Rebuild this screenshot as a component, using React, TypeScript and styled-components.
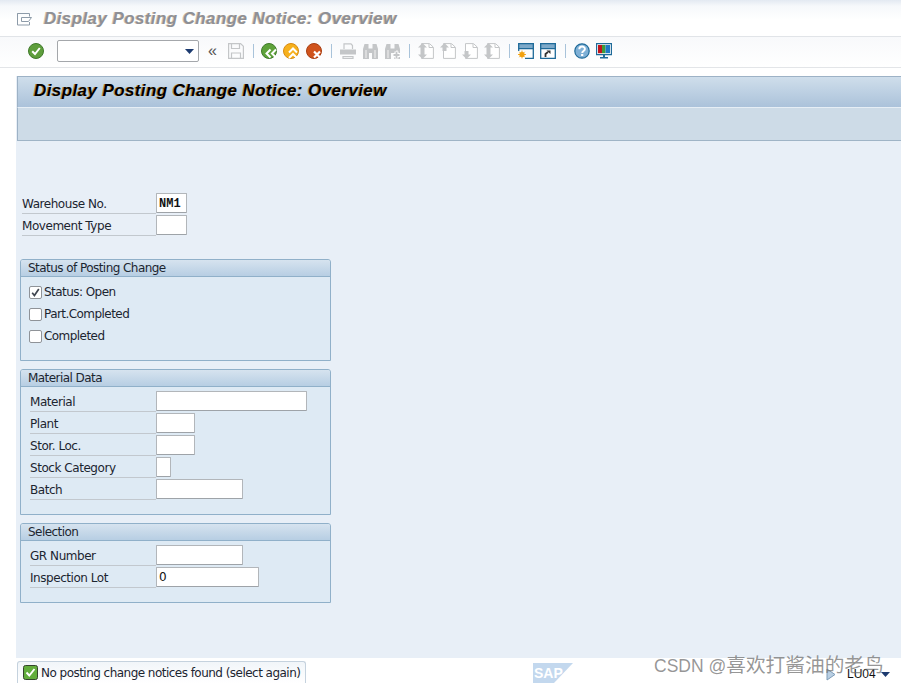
import styled, { createGlobalStyle } from "styled-components";

const GlobalStyle = createGlobalStyle`
    html, body {
        margin: 0;
        padding: 0;
        background: #fff;
    }
    body {
        font-family: "DejaVu Sans", "Noto Sans", sans-serif;
    }
    * {
        box-sizing: border-box;
    }
`;

const Page = styled.div`
    position: relative;
    width: 901px;
    height: 683px;
    overflow: hidden;
    display: flex;
    flex-direction: column;
    background: #fff;
`;

const TitleBar = styled.div`
    height: 37px;
    flex: none;
    display: flex;
    align-items: center;
    gap: 12px;
    padding: 2px 0 0 17px;
    background: linear-gradient(#e3e9f2 0, #f6f8fb 6px, #fff 20px);
    border-bottom: 1px solid #e1e4e8;
`;

const WindowTitle = styled.h1`
    margin: 0;
    font: italic bold 17px "Liberation Sans", Arial, sans-serif;
    letter-spacing: 0.4px;
    color: #8e9096;
    text-shadow: -1px 0 0 #d9c6ad;
`;

const Toolbar = styled.div`
    height: 31px;
    flex: none;
    display: flex;
    align-items: center;
    padding: 0 0 2px 27px;
    background: linear-gradient(#f8f9fb, #fff);
    border-bottom: 1px solid #e3e5e8;
`;

const ToolIcon = styled.span<{ $mr?: number }>`
    display: flex;
    flex: none;
    width: 18px;
    margin-right: ${({ $mr }) => $mr ?? 0}px;
    align-items: center;
    justify-content: center;
`;

const ToolSep = styled.span<{ $mr: number }>`
    width: 1px;
    height: 14px;
    flex: none;
    background: #a9c3da;
    margin-right: ${({ $mr }) => $mr}px;
`;

const CommandField = styled.div`
    width: 142px;
    height: 22px;
    flex: none;
    margin: 0 6px 0 12px;
    display: flex;
    align-items: center;
    justify-content: flex-end;
    padding-right: 4px;
    background: #fff;
    border: 1px solid #a4a7ab;
    border-radius: 2px;
`;

const ChevronText = styled.span`
    font: 16px "Liberation Sans", Arial, sans-serif;
    color: #555;
    width: 15px;
    margin-right: 7px;
    flex: none;
    text-align: center;
    line-height: 18px;
`;

const Main = styled.main`
    flex: 1;
    margin: 8px 0 0 16px;
    display: flex;
    flex-direction: column;
    background: #e8eff7;
    min-height: 0;
`;

const ScreenHead = styled.div`
    height: 31px;
    flex: none;
    display: flex;
    align-items: center;
    margin-left: 1px;
    padding: 0 0 2px 16px;
    background: linear-gradient(#cfdeeb, #abc2da);
    border-top: 1px solid #9db2c6;
    border-left: 1px solid #9db2c6;
`;

const ScreenTitle = styled.h2`
    margin: 0;
    font: italic bold 17px "Liberation Sans", Arial, sans-serif;
    letter-spacing: 0.4px;
    color: #000;
    text-shadow: -1px 0 0 #b98a3e;
`;

const AppToolbar = styled.div`
    height: 34px;
    flex: none;
    margin-left: 1px;
    background: #cddbe7;
    border-top: 1px solid #e6eef5;
    border-bottom: 1px solid #9fb4c6;
    border-left: 1px solid #9db2c6;
`;

const Form = styled.div`
    padding: 52px 0 0 4px;
    display: flex;
    flex-direction: column;
`;

const TopRows = styled.div`
    padding: 0 0 0 2px;
    margin-bottom: 22px;
`;

const Row = styled.div`
    height: 22px;
    display: flex;
    align-items: flex-start;
`;

const Label = styled.label<{ $w: number }>`
    width: ${({ $w }) => $w}px;
    height: 21px;
    flex: none;
    padding-top: 3px;
    font-size: 12px;
    line-height: 16px;
    letter-spacing: -0.45px;
    color: #1c2530;
    border-bottom: 1px solid #c2c8ce;
    white-space: nowrap;
    overflow: hidden;
`;

const Field = styled.div<{ $w: number; $mono?: boolean }>`
    width: ${({ $w }) => $w}px;
    height: 20px;
    flex: none;
    padding: 0 0 0 2px;
    background: #fff;
    border: 1px solid #b2b6ba;
    border-bottom-color: #9ea3a8;
    border-radius: 1px;
    font: ${({ $mono }) => ($mono ? 'bold 12px/20px "Liberation Mono", "DejaVu Sans Mono", monospace' : '12px/18px "DejaVu Sans", sans-serif')};
    color: #111;
`;

const Group = styled.section<{ $h: number }>`
    width: 311px;
    height: ${({ $h }) => $h}px;
    flex: none;
    margin-bottom: 8px;
    background: #deeaf4;
    border: 1px solid #90b0c9;
    border-radius: 3px 3px 0 0;
`;

const GroupHead = styled.div`
    height: 17px;
    padding-left: 7px;
    font-size: 12px;
    line-height: 17px;
    letter-spacing: -0.55px;
    color: #1c2530;
    background: linear-gradient(#d6e3ef, #b7cee3);
    border-bottom: 1px solid #90b0c9;
    border-radius: 2px 2px 0 0;
`;

const GroupBody = styled.div<{ $top: number }>`
    padding: ${({ $top }) => $top}px 0 0 9px;
`;

const CheckRow = styled.div`
    height: 22px;
    display: flex;
    align-items: center;
    gap: 2px;
    margin-left: -1px;
    font-size: 12px;
    letter-spacing: -0.55px;
    color: #1c2530;
`;

const Check = styled.span`
    width: 13px;
    height: 13px;
    flex: none;
    display: flex;
    align-items: center;
    justify-content: center;
    background: #fff;
    border: 1px solid #8f9398;
    border-radius: 2px;
`;

const StatusBar = styled.footer`
    height: 25px;
    flex: none;
    display: flex;
    align-items: center;
    padding-left: 17px;
    background: #fff;
`;

const Message = styled.div`
    width: 289px;
    height: 22px;
    align-self: flex-start;
    margin-top: 3px;
    display: flex;
    align-items: center;
    gap: 3px;
    padding-left: 5px;
    font-size: 12px;
    letter-spacing: -0.53px;
    white-space: nowrap;
    color: #1c2530;
    background: linear-gradient(#f1f5f9, #fff);
    border: 1px solid #c5d2de;
    border-bottom: none;
    border-radius: 3px 3px 0 0;
`;

const SapLogo = styled.svg`
    position: absolute;
    left: 533px;
    top: 663px;
`;

const SystemInfo = styled.div`
    position: absolute;
    left: 826px;
    top: 667px;
    display: flex;
    align-items: center;
    font: 12px "Liberation Sans", Arial, sans-serif;
    color: #111;
`;

const SystemName = styled.span`
    margin: 0 5px 0 11px;
`;

const Watermark = styled.div`
    position: absolute;
    left: 654px;
    top: 655px;
    font: 17.5px/20px "Liberation Sans", "Noto Sans CJK SC", sans-serif;
    color: rgba(110, 110, 110, 0.72);
    white-space: nowrap;
`;

const WatermarkName = styled.span`
    font-size: 19.7px;
`;

const OkIcon = () => (
    <svg width="16" height="16" viewBox="0 0 16 16">
        <circle cx="8" cy="8" r="7.5" fill="#5e9e3c" stroke="#3f7a2b" />
        <path d="M4.2 8.2 7 11l4.8-6" fill="none" stroke="#fff" strokeWidth="2" />
    </svg>
);

const Round = ({ fill, edge, children }: { fill: string; edge: string; children: React.ReactNode }) => (
    <svg width="16" height="16" viewBox="0 0 16 16">
        <circle cx="8" cy="8" r="7.5" fill={fill} stroke={edge} />
        {children}
    </svg>
);

const BackIcon = () => (
    <Round fill="#5ea23a" edge="#3f7a2b">
        <path d="M9.500 6.500 5.500 10.500l4 4M15 6.500 11 10.500l4 4" fill="none" stroke="#fff" strokeWidth="2" />
    </Round>
);

const ExitIcon = () => (
    <Round fill="#f6b01c" edge="#d88a10">
        <path d="M6 9.500 10 5.500l4 4M6 15 10 11l4 4" fill="none" stroke="#fff" strokeWidth="2" />
    </Round>
);

const CancelIcon = () => (
    <Round fill="#d0531c" edge="#a83e12">
        <path d="M8 8.500l6 6M14 8.500l-6 6" fill="none" stroke="#fff" strokeWidth="2.200" />
    </Round>
);

const grey = "#c4c6c8";

const SaveIcon = () => (
    <svg width="16" height="16" viewBox="0 0 16 16" fill="none" stroke={grey} strokeWidth="1.2">
        <path d="M.6.6h12l2.8 2.6v12.2H.6z" />
        <path d="M3.5 1v4.5h8V1M3.5 15v-5h9v5" />
    </svg>
);

const PrintIcon = () => (
    <svg width="16" height="16" viewBox="0 0 16 16" fill="none" stroke={grey} strokeWidth="1.2">
        <path d="M4 6V.8h7L12.5 2.5V6" />
        <path d="M.6 7h14.8v4H.6z" fill={grey} />
        <path d="M3 13.5h10v1.8H3z" />
    </svg>
);

const FindIcon = ({ plus }: { plus?: boolean }) => (
    <svg width="15" height="15" viewBox="0 0 15 15" fill={grey}>
        <path d="M1.500 0h4v4.500h4V0h4l1.500 5v10H9V9H6v6H0V5z" />
        <path d="M3 6v8M12 6v8" stroke="#ececec" strokeWidth="1.200" />
        {plus && <path d="M8 11h7M11.500 7.500v7" stroke="#fff" strokeWidth="4" />}
        {plus && <path d="M8.500 11h6M11.500 8v6" stroke={grey} strokeWidth="1.800" />}
    </svg>
);

// page navigation, arrows: up/down at either side of a dog-eared sheet
const PageIcon = ({ up, down }: { up?: boolean; down?: boolean }) => (
    <svg width="16" height="16" viewBox="0 0 16 16">
        <path d="M3.5.6h8l3.9 3.6v11.200H3.5z" fill="#fff" stroke={grey} />
        <path d="M11 1v3.500h4" fill="none" stroke={grey} />
        {up && <path d="M4.500 0 9 4.500H6.500V8h-4V4.500H0z" fill={grey} />}
        {down && <path d="M4.500 16 9 11.500H6.500V8h-4v3.500H0z" fill={grey} />}
    </svg>
);

const NewWindowIcon = () => (
    <svg width="16" height="16" viewBox="0 0 16 16">
        <path d="M.7.7h14.600v14.600H7" fill="none" stroke="#1f6a99" strokeWidth="1.3" />
        <path d="M.7.7h14.600v5H.7z" fill="#7da9c9" stroke="#1f6a99" strokeWidth="1.3" />
        <path d="M.7 5.500V8" stroke="#1f6a99" strokeWidth="1.3" />
        <circle cx="4" cy="11.500" r="2.600" fill="#f3a20f" />
        <path d="M4 7.600v7.800M.1 11.500h7.800M1.300 8.800l5.400 5.400M6.700 8.800l-5.400 5.400" stroke="#f3a20f" />
    </svg>
);

const ShortcutIcon = () => (
    <svg width="16" height="16" viewBox="0 0 16 16">
        <path d="M.7.7h14.600v14.600H.7z" fill="#fff" stroke="#1f6a99" strokeWidth="1.3" />
        <path d="M.7.7h14.600v5H.7z" fill="#7da9c9" stroke="#1f6a99" strokeWidth="1.3" />
        <path d="M5.500 14v-3l2.500-2" fill="none" stroke="#333" strokeWidth="1.800" />
        <path d="M6.500 7.500h4V11z" fill="#333" />
    </svg>
);

const HelpIcon = () => (
    <svg width="16" height="16" viewBox="0 0 16 16">
        <circle cx="8" cy="8" r="7.200" fill="#7fb0d6" stroke="#1f6a99" strokeWidth="1.200" />
        <path d="M5.300 6.200c0-3.600 5.600-3.400 5.600-.3 0 2-2.700 2-2.700 4" fill="none" stroke="#fff" strokeWidth="1.900" />
        <path d="M7.100 11h2.200v2H7.100z" fill="#fff" />
    </svg>
);

const LayoutIcon = () => (
    <svg width="16" height="16" viewBox="0 0 16 16">
        <path d="M.6.6h14.800v11H.6z" fill="#fff" stroke="#1f6a99" strokeWidth="1.200" />
        <path d="M2 2h4v8.200H2z" fill="#c0141c" />
        <path d="M6 2h3.500v8.200H6z" fill="#3f9b3a" />
        <path d="M9.500 2H14v8.200H9.500z" fill="#1f78c4" />
        <path d="M7 11.500h2V14H7zM4 14h8v1.500H4z" fill="#1f6a99" />
    </svg>
);

const ScreenGlyph = () => (
    <svg width="15" height="13" viewBox="0 0 15 13" fill="none" stroke="#8d9ba9" strokeWidth="1">
        <path d="M.5 3.500v-3h12v3M.5.500v11.500h12v-3" />
        <path d="M4.500 4.500h10l-3 4h-7z" />
    </svg>
);

const Caret = ({ color }: { color: string }) => (
    <svg width="9" height="5" viewBox="0 0 9 5">
        <path d="M0 0h9L4.500 5z" fill={color} />
    </svg>
);

const Tick = () => (
    <svg width="9" height="9" viewBox="0 0 9 9">
        <path d="M1.200 4.800 3.400 7.500 7.800 1" fill="none" stroke="#404650" strokeWidth="1.700" />
    </svg>
);

const SuccessIcon = () => (
    <svg width="15" height="15" viewBox="0 0 15 15">
        <rect x=".5" y=".5" width="14" height="14" rx="2" fill="#62ad3c" stroke="#33452c" />
        <path d="M3.500 7.500 6.300 10.500 11.500 4" fill="none" stroke="#fff" strokeWidth="1.900" />
    </svg>
);

const materialRows = [
    { label: "Material", w: 151 },
    { label: "Plant", w: 39 },
    { label: "Stor. Loc.", w: 39 },
    { label: "Stock Category", w: 15 },
    { label: "Batch", w: 87 },
];

const selectionRows = [
    { label: "GR Number", w: 87, value: "" },
    { label: "Inspection Lot", w: 103, value: "0" },
];

export default function App() {
    return (
        <Page>
            <GlobalStyle />
            <TitleBar>
                <ScreenGlyph />
                <WindowTitle>Display Posting Change Notice: Overview</WindowTitle>
            </TitleBar>
            <Toolbar>
                <ToolIcon><OkIcon /></ToolIcon>
                <CommandField><Caret color="#1d3b70" /></CommandField>
                <ChevronText>«</ChevronText>
                <ToolIcon $mr={8}><SaveIcon /></ToolIcon>
                <ToolSep $mr={6} />
                <ToolIcon $mr={4}><BackIcon /></ToolIcon>
                <ToolIcon $mr={5}><ExitIcon /></ToolIcon>
                <ToolIcon $mr={8}><CancelIcon /></ToolIcon>
                <ToolSep $mr={7} />
                <ToolIcon $mr={4}><PrintIcon /></ToolIcon>
                <ToolIcon $mr={4}><FindIcon /></ToolIcon>
                <ToolIcon $mr={8}><FindIcon plus /></ToolIcon>
                <ToolSep $mr={7} />
                <ToolIcon $mr={4}><PageIcon up down /></ToolIcon>
                <ToolIcon $mr={4}><PageIcon up /></ToolIcon>
                <ToolIcon $mr={4}><PageIcon down /></ToolIcon>
                <ToolIcon $mr={8}><PageIcon up down /></ToolIcon>
                <ToolSep $mr={7} />
                <ToolIcon $mr={4}><NewWindowIcon /></ToolIcon>
                <ToolIcon $mr={8}><ShortcutIcon /></ToolIcon>
                <ToolSep $mr={7} />
                <ToolIcon $mr={4}><HelpIcon /></ToolIcon>
                <ToolIcon><LayoutIcon /></ToolIcon>
            </Toolbar>
            <Main>
                <ScreenHead>
                    <ScreenTitle>Display Posting Change Notice: Overview</ScreenTitle>
                </ScreenHead>
                <AppToolbar />
                <Form>
                    <TopRows>
                        <Row>
                            <Label $w={134}>Warehouse No.</Label>
                            <Field $w={31} $mono>NM1</Field>
                        </Row>
                        <Row>
                            <Label $w={134}>Movement Type</Label>
                            <Field $w={31} />
                        </Row>
                    </TopRows>
                    <Group $h={102}>
                        <GroupHead>Status of Posting Change</GroupHead>
                        <GroupBody $top={4}>
                            <CheckRow><Check><Tick /></Check>Status: Open</CheckRow>
                            <CheckRow><Check />Part.Completed</CheckRow>
                            <CheckRow><Check />Completed</CheckRow>
                        </GroupBody>
                    </Group>
                    <Group $h={146}>
                        <GroupHead>Material Data</GroupHead>
                        <GroupBody $top={4}>
                            {materialRows.map((row) => (
                                <Row key={row.label}>
                                    <Label $w={126}>{row.label}</Label>
                                    <Field $w={row.w} />
                                </Row>
                            ))}
                        </GroupBody>
                    </Group>
                    <Group $h={80}>
                        <GroupHead>Selection</GroupHead>
                        <GroupBody $top={4}>
                            {selectionRows.map((row) => (
                                <Row key={row.label}>
                                    <Label $w={126}>{row.label}</Label>
                                    <Field $w={row.w}>{row.value}</Field>
                                </Row>
                            ))}
                        </GroupBody>
                    </Group>
                </Form>
            </Main>
            <StatusBar>
                <Message><SuccessIcon />No posting change notices found (select again)</Message>
            </StatusBar>
            <SapLogo width="40" height="20" viewBox="0 0 40 20">
                <path d="M0 0h40L21 20H0z" fill="#c3d8ee" />
                <text x="1" y="15" fontFamily="Liberation Sans" fontWeight="700" fontSize="14" fill="#fff">SAP</text>
            </SapLogo>
            <SystemInfo>
                <svg width="10" height="13" viewBox="0 0 10 13"><path d="M1 1l8 5.500-8 5.500z" fill="#b9cfe3" stroke="#7f9db8" /></svg>
                <SystemName>LU04</SystemName>
                <Caret color="#1d3b70" />
            </SystemInfo>
            <Watermark>CSDN @<WatermarkName>喜欢打酱油的老鸟</WatermarkName></Watermark>
        </Page>
    );
}
